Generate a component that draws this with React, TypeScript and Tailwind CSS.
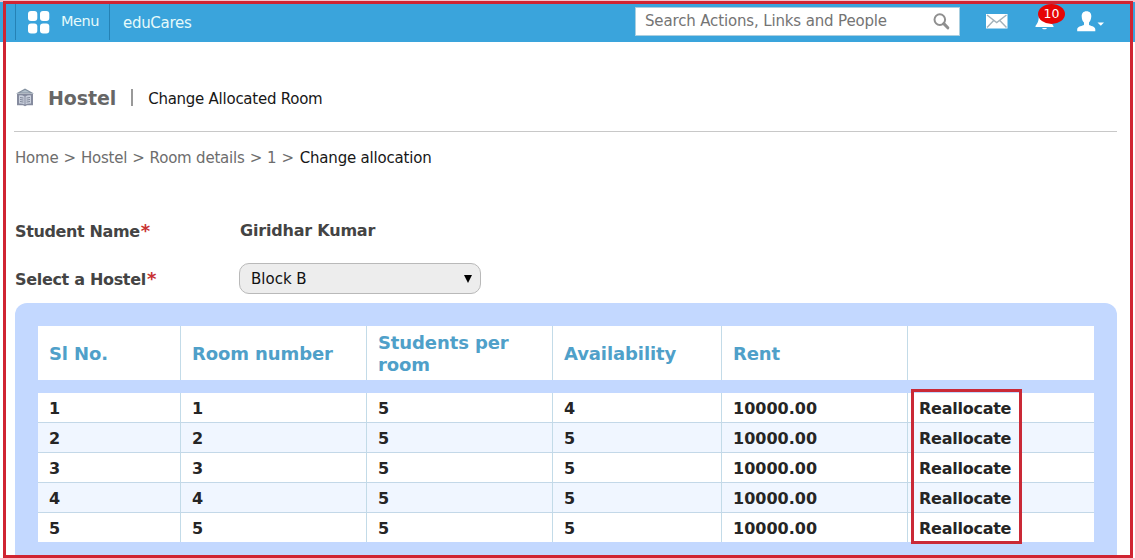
const rows = [
  ['1', '1', '5', '4', '10000.00'],
  ['2', '2', '5', '5', '10000.00'],
  ['3', '3', '5', '5', '10000.00'],
  ['4', '4', '5', '5', '10000.00'],
  ['5', '5', '5', '5', '10000.00'],
];

const headings = ['Sl No.', 'Room number', 'Students per room', 'Availability', 'Rent', ''];

const columns = 'grid grid-cols-[143px_186px_186px_169px_186px_186px]';

function MenuIcon() {
  return (
    <svg width="22" height="23" viewBox="0 0 22 23" fill="#fff" className="shrink-0">
      <rect x="0" y="0" width="9.3" height="10" rx="3" />
      <rect x="12" y="0" width="9.3" height="10" rx="3" />
      <rect x="0" y="12.5" width="9.3" height="10" rx="3" />
      <rect x="12" y="12.5" width="9.3" height="10" rx="3" />
    </svg>
  );
}

function SearchIcon() {
  return (
    <svg width="17" height="17" viewBox="0 0 17 17" fill="none" stroke="#8f8f8f">
      <circle cx="6.8" cy="6.6" r="5.3" strokeWidth="2" />
      <path d="M10.8 10.6l4 4.2" strokeWidth="3" strokeLinecap="round" />
    </svg>
  );
}

function MailIcon() {
  return (
    <svg width="22" height="15" viewBox="0 0 22 15">
      <rect width="21.5" height="14.5" fill="#fff" />
      <path d="M1 1l9.7 7.5L20.5 1M1 13.5l6.7-7M20.5 13.5l-6.7-7" fill="none" stroke="#a3b2ba" strokeWidth="1.4" />
    </svg>
  );
}

function BellIcon() {
  return (
    <svg width="19" height="22" viewBox="0 0 19 22" fill="#fff">
      <path d="M9.5 1c3.800 0 5.700 2.500 5.700 6 0 5 1.300 7.500 3.300 10v1H.5v-1c2-2.500 3.300-5 3.300-10 0-3.500 1.900-6 5.700-6z" />
      <path d="M7 19h5c-.5 1.800-4.500 1.800-5 0z" />
    </svg>
  );
}

function UserIcon() {
  return (
    <svg width="28" height="21" viewBox="0 0 28 21" fill="#fff">
      <path d="M9.500.2c3.300 0 5 2.200 4.800 5.300-.2 2.900-1.200 4.800-2.300 6v2.200c1 1.200 6.300 1.500 6.300 4.600v2H.2v-2c0-3.100 5.800-3.400 6.800-4.600v-2.200c-1.300-1.200-2.200-3.100-2.300-6C4.500 2.400 6.200.2 9.500.2z" />
      <path d="M20.500 11.500h6.500l-3.200 3.300z" />
    </svg>
  );
}

function HostelIcon() {
  return (
    <svg width="18" height="19" viewBox="0 0 18 19">
      <path d="M0 5.500L9 .5l9 5z" fill="#8491a0" />
      <path d="M4 4.500L9 2l5 2.500z" fill="#b3c0cb" />
      <path d="M1 5.800h16v11.500h-6L9 18.300l-2-1H1z" fill="#858b9e" />
      <path d="M3 7.500c2-.5 4-.2 5.500.9v8c-1.500-.8-3.500-1-5.500-.8zM15 7.500c-2-.5-4-.2-5.500.9v8c1.500-.8 3.500-1 5.500-.8z" fill="#c9cfdc" />
      <path d="M4 9.500l3.500.6M4 11.500l3.500.6M4 13.500l3.500.6M14 9.500l-3.500.6M14 11.500l-3.500.6M14 13.500l-3.500.6" stroke="#777f91" strokeWidth=".9" />
    </svg>
  );
}

function Header() {
  return (
    <header className="flex h-[42px] shrink-0 border-t-2 border-[#f4c3cb] bg-[#3aa4dc] text-[15px] text-[#e5fafa]">
      <div className="mb-[2px] ml-[15px] mt-[2px] flex w-[95px] border-x border-[#2582b5] pl-[12px] pt-[7px]">
        <MenuIcon />
        <span className="ml-[11px] leading-[20px] tracking-[-0.45px] text-[14.5px]">Menu</span>
      </div>
      <span className="ml-[13px] mt-[11px] leading-[20px] tracking-[-0.3px]">eduCares</span>
      <div className="ml-auto mt-[5px] flex h-[29px] w-[325px] items-center justify-between border border-[#aacfe0] bg-white pl-[9px] pr-[9px] text-[#747474]">
        <span className="tracking-[-0.15px]">Search Actions, Links and People</span>
        <SearchIcon />
      </div>
      <div className="flex w-[175px] pl-[26px]">
        <div className="mt-[12px]"><MailIcon /></div>
        <div className="relative ml-[27px] mt-[7px]">
          <BellIcon />
          <span className="absolute -top-[5px] left-[3px] flex h-[20px] w-[27px] items-center justify-center rounded-[50%] bg-[#e60505] pt-px text-[12.5px] text-white">10</span>
        </div>
        <div className="ml-[23px] mt-[9px]"><UserIcon /></div>
      </div>
    </header>
  );
}

export default function App() {
  return (
    <div className="relative flex h-[558px] w-[1135px] flex-col overflow-hidden bg-white font-['DejaVu_Sans',sans-serif]">
      <Header />
      <main className="flex flex-1 flex-col pl-[15px] pr-[18px]">
        <div className="-ml-px flex h-[90px] items-center border-b border-[#c8c8c8] pt-[22px]">
          <span className="ml-[2px]"><HostelIcon /></span>
          <h1 className="ml-[14px] text-[19px] font-bold leading-[24px] tracking-[-0.1px] text-[#666]">Hostel</h1>
          <span className="ml-[15px] h-[17px] w-[2px] bg-[#999]" />
          <span className="ml-[15px] mt-[3px] text-[15px] leading-[20px] tracking-[-0.25px] text-[#171717]">Change Allocated Room</span>
        </div>
        <nav className="mt-[16px] flex gap-[5px] text-[15px] leading-[20px] tracking-[-0.2px] text-[#6d6d6d]">
          <span>Home</span><span>&gt;</span><span>Hostel</span><span>&gt;</span><span>Room details</span><span>&gt;</span><span>1</span><span>&gt;</span><span className="ml-px text-[#171717]">Change allocation</span>
        </nav>
        <div className="mt-[52px] flex h-[22px] items-center text-[16px] font-bold text-[#444]">
          <span className="w-[225px] pt-px tracking-[-0.37px]">Student Name<span className="ml-px text-[18px] leading-[16px] text-[#c83232]">*</span></span>
          <span className="tracking-[-0.2px]">Giridhar Kumar</span>
        </div>
        <div className="mt-[21px] flex h-[31px] items-center text-[16px]">
          <span className="w-[224px] pt-[2px] font-bold tracking-[-0.32px] text-[#444]">Select a Hostel<span className="ml-px text-[18px] leading-[16px] text-[#c83232]">*</span></span>
          <button className="flex h-[31px] w-[242px] items-center justify-between rounded-[10px] border border-[#b9b9b9] bg-[#ededed] pl-[11px] pr-[8px] pt-px text-[15px] text-[#111]">
            Block B
            <svg width="8" height="8" viewBox="0 0 8 8"><path d="M0 0h8L4 8z" fill="#000" /></svg>
          </button>
        </div>
        <section className="mt-[9px] flex-1 rounded-t-[12px] bg-[#c3d8ff] pl-[23px] pt-[23px]">
          <div className="w-[1056px] bg-white">
            <div className={`${columns} h-[54px]`}>
              {headings.map((h, i) => (
                <div key={i} className="flex items-center border-r border-[#c3dbe8] pl-[11px] pr-[20px] pt-[2px] text-[18px] font-bold leading-[22px] tracking-[-0.1px] text-[#4fa0c9] last:border-r-0">{h}</div>
              ))}
            </div>
          </div>
          <div className="mt-[13px] w-[1056px]">
            {rows.map((r, i) => (
              <div key={i} className={`${columns} h-[30px] border-b border-[#c3d8e8] last:h-[29px] last:border-b-0 odd:bg-white even:bg-[#f0f6ff]`}>
                {[...r, 'Reallocate'].map((c, j) => (
                  <div key={j} className="flex items-center border-r border-[#c3dbe8] pl-[11px] pt-[2px] text-[16px] font-bold leading-[20px] text-[#252525] last:border-r-0 last:tracking-[-0.25px]">{c}</div>
                ))}
              </div>
            ))}
          </div>
        </section>
      </main>
      <div className="pointer-events-none absolute left-[911px] top-[389px] h-[155px] w-[111px] border-[3px] border-[#ca2936]" />
      <div className="pointer-events-none absolute left-[3px] top-[1px] h-[557px] w-[1130px] border-[3px] border-[#d02432]" />
    </div>
  );
}
